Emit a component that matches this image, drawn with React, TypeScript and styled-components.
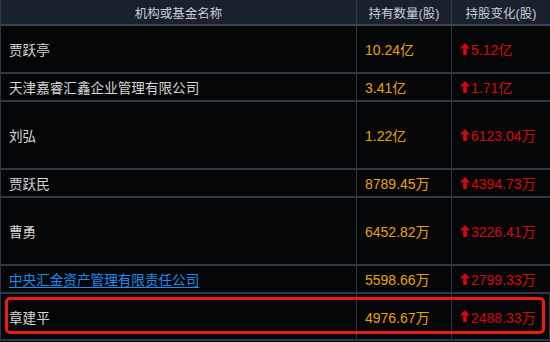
import React from 'react'
import styled, { createGlobalStyle } from 'styled-components'

const GRID = '#2c3848'

const GlobalStyle = createGlobalStyle`
  html, body {
    margin: 0;
    padding: 0;
    background: #050608;
  }
`

type Holder = {
  name: string
  held: string
  change: string
  height: number
  link?: boolean
  marked?: boolean
}

const HOLDERS: Holder[] = [
  { name: '贾跃亭', held: '10.24亿', change: '5.12亿', height: 46 },
  { name: '天津嘉睿汇鑫企业管理有限公司', held: '3.41亿', change: '1.71亿', height: 26 },
  { name: '刘弘', held: '1.22亿', change: '6123.04万', height: 66 },
  { name: '贾跃民', held: '8789.45万', change: '4394.73万', height: 26 },
  { name: '曹勇', held: '6452.82万', change: '3226.41万', height: 66 },
  { name: '中央汇金资产管理有限责任公司', held: '5598.66万', change: '2799.33万', height: 26, link: true },
  { name: '章建平', held: '4976.67万', change: '2488.33万', height: 45, marked: true },
]

const Table = styled.div`
  width: 550px;
  font-family: "Liberation Sans", "Noto Sans CJK SC", sans-serif;
  border-left: 1px solid ${GRID};
  box-sizing: border-box;
`

const Row = styled.div<{ $h: number; $head?: boolean }>`
  position: relative;
  display: grid;
  grid-template-columns: 356px 95px 1fr;
  height: ${({ $h }) => $h}px;
  border-bottom: 2px solid ${({ $head }) => ($head ? '#3a4658' : GRID)};
  background: ${({ $head }) => ($head ? '#19212d' : '#050608')};
`

const Cell = styled.div<{ $center?: boolean }>`
  display: flex;
  align-items: center;
  justify-content: ${({ $center }) => ($center ? 'center' : 'flex-start')};
  padding-left: ${({ $center }) => ($center ? 0 : 8)}px;
  border-right: 1px solid ${GRID};
  white-space: nowrap;
  overflow: hidden;
  &:last-child {
    border-right: none;
  }
`

const HeadText = styled.span`
  color: #c9ced6;
  font-size: 12.5px;
`

const Name = styled.span<{ $link?: boolean }>`
  font-size: 13.6px;
  color: ${({ $link }) => ($link ? '#1c8df2' : '#d6d6d6')};
  text-decoration: ${({ $link }) => ($link ? 'underline' : 'none')};
  text-underline-offset: 2px;
`

const Held = styled.span`
  font-size: 14px;
  color: #eca300;
`

const Change = styled.span`
  display: flex;
  align-items: center;
  font-size: 14px;
  color: #da0606;
`

const Arrow = styled.svg`
  flex-shrink: 0;
  width: 10px;
  height: 12px;
  margin-right: 1px;
  margin-top: -1px;
`

const Mark = styled.div`
  position: absolute;
  left: 4px;
  right: 5px;
  top: 3px;
  bottom: 5px;
  border: 3px solid #ee1b12;
  border-radius: 5px;
  pointer-events: none;
`

const UpArrow = () => (
  <Arrow viewBox="0 0 10 12">
    <path d="M5 0 L10 5.5 L6.8 5.5 L6.8 12 L3.2 12 L3.2 5.5 L0 5.5 Z" fill="#da0606" />
  </Arrow>
)

export default function App() {
  return (
    <>
      <GlobalStyle />
      <Table>
        <Row $h={24} $head>
          <Cell $center><HeadText>机构或基金名称</HeadText></Cell>
          <Cell $center><HeadText>持有数量(股)</HeadText></Cell>
          <Cell $center><HeadText>持股变化(股)</HeadText></Cell>
        </Row>
        {HOLDERS.map(h => (
          <Row key={h.name} $h={h.height}>
            <Cell><Name $link={h.link}>{h.name}</Name></Cell>
            <Cell><Held>{h.held}</Held></Cell>
            <Cell>
              <Change><UpArrow />{h.change}</Change>
            </Cell>
            {h.marked && <Mark />}
          </Row>
        ))}
      </Table>
    </>
  )
}
